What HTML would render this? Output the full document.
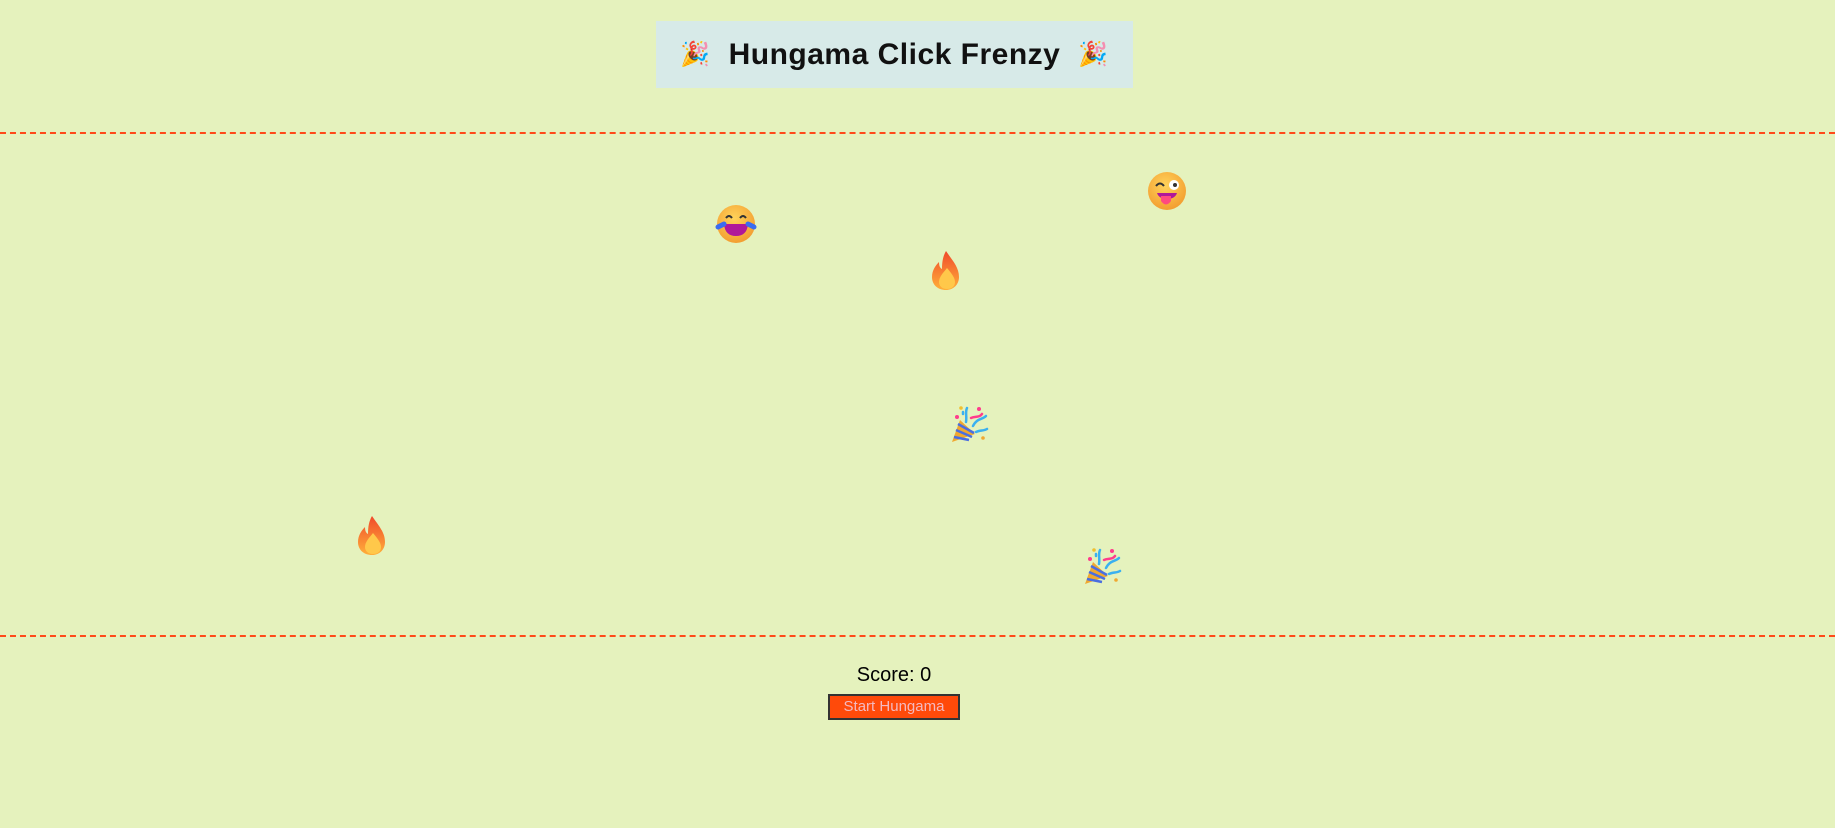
<!DOCTYPE html>
<html><head><meta charset="utf-8"><style>
html,body{margin:0;padding:0}
body{width:1835px;height:828px;background:#e5f2bd;position:relative;overflow:hidden;font-family:"Comic Sans MS","Liberation Sans",sans-serif}
.title{position:absolute;left:656px;top:21px;width:477px;height:67px;background:#d7eae8;display:flex;align-items:center;justify-content:center;font-size:30px;font-weight:bold;color:#111;letter-spacing:0.5px}
.dash{position:absolute;left:0;width:1835px;border-top:2px dashed #ff4a1a}
.score{position:absolute;left:794px;width:200px;top:664px;text-align:center;font-size:20px;color:#000}
.btn{position:absolute;left:828px;top:694px;width:128px;height:22px;background:#ff4a0a;border:2px solid #333;color:#f3b9c0;font-family:"Liberation Sans",sans-serif;font-size:15px;text-align:center;line-height:22px}
svg.e{position:absolute}
</style></head><body>
<div class="title"><span style="font-size:24px;margin-right:18px">🎉</span>Hungama Click Frenzy<span style="font-size:24px;margin-left:18px">🎉</span></div>
<div class="dash" style="top:132px"></div>
<div class="dash" style="top:635px"></div>
<div class="score">Score: 0</div>
<div class="btn">Start Hungama</div>
<svg width="0" height="0" style="position:absolute"><defs>
<radialGradient id="fg" cx="0.45" cy="0.35" r="0.7"><stop offset="0" stop-color="#ffd35a"/><stop offset="1" stop-color="#f29a2e"/></radialGradient>
<linearGradient id="fl" x1="0" y1="0" x2="0" y2="1"><stop offset="0" stop-color="#f04a2a"/><stop offset="1" stop-color="#ffb03a"/></linearGradient>
<symbol id="fire" viewBox="0 0 30 41"><path d="M16 1C22 10 29 17 29 27C29 35 23 40 16 40C8 40 2 35 2 27C2 20 6 15 9 12C9 16 10 18 12 19C12 12 13 6 16 1Z" fill="url(#fl)"/><path d="M17 18C22 24 25 28 25 32C25 37 21 39 17 39C12 39 9 36 9 32C9 27 13 23 17 18Z" fill="#ffc84a"/></symbol>
<symbol id="pop" viewBox="0 0 40 40"><path d="M3 38L11 16L26 30Z" fill="#f0a830"/><path d="M5 33L20 36M7 26L23 33M9 20L25 29" stroke="#4a6ee0" stroke-width="2.5"/><path d="M17 18C18 12 16 8 18 4M14 10v-2M24 22C28 14 33 16 37 12M27 28C31 26 35 27 38 25" stroke="#3ab0f0" stroke-width="2.5" fill="none" stroke-linecap="round"/><path d="M22 14C26 12 30 14 33 10" stroke="#ff3c8c" stroke-width="2.5" fill="none" stroke-linecap="round"/><circle cx="8" cy="13" r="2" fill="#ff3c8c"/><circle cx="30" cy="5" r="2" fill="#ff3c8c"/><circle cx="34" cy="34" r="1.8" fill="#f0a830"/><circle cx="12" cy="4" r="1.8" fill="#f0c030"/></symbol>
</defs></svg>
<svg class="e" style="left:715px;top:203px" width="42" height="42" viewBox="0 0 42 42"><circle cx="21" cy="21" r="19" fill="url(#fg)"/><path d="M11 15q3-4 6 0M25 15q3-4 6 0" stroke="#333" stroke-width="2" fill="none"/><path d="M9 21h24q-1 12-12 12t-12-12z" fill="#b0189a"/><path d="M3 24l6-3M39 24l-6-3" stroke="#3a6cf0" stroke-width="5" stroke-linecap="round"/></svg>
<svg class="e" style="left:1146px;top:170px" width="42" height="42" viewBox="0 0 42 42"><circle cx="21" cy="21" r="19" fill="url(#fg)"/><path d="M10 16q4-5 8 0" stroke="#333" stroke-width="2" fill="none"/><circle cx="28" cy="15" r="5" fill="#fff"/><circle cx="29" cy="15" r="2" fill="#333"/><path d="M11 23h20q-2 6-10 6t-10-6z" fill="#b0189a"/><path d="M15 26h10v5q-5 7-10 0z" fill="#ff4a80"/></svg>
<svg class="e" style="left:930px;top:250px" width="30" height="41"><use href="#fire"/></svg>
<svg class="e" style="left:356px;top:515px" width="30" height="41"><use href="#fire"/></svg>
<svg class="e" style="left:949px;top:404px" width="40" height="40"><use href="#pop"/></svg>
<svg class="e" style="left:1082px;top:546px" width="40" height="40"><use href="#pop"/></svg>
</body></html>
